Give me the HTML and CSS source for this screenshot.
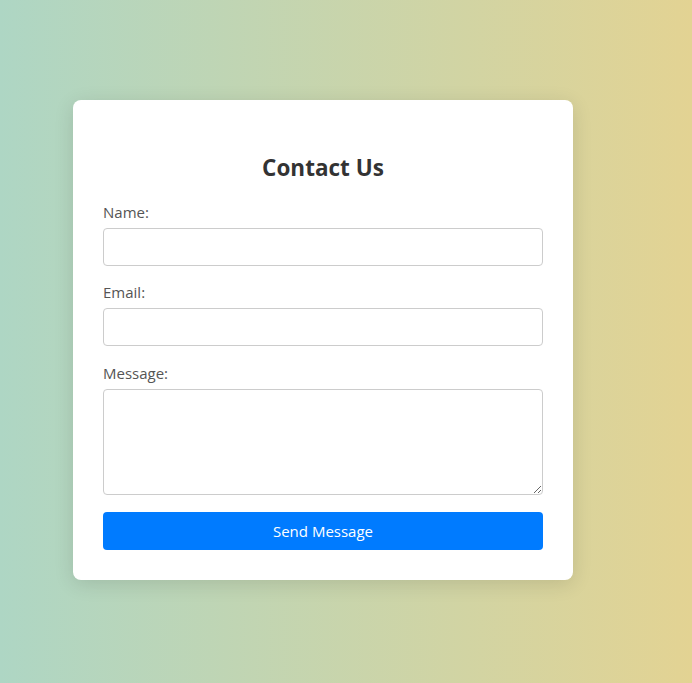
FILE: index.html
```html
<!DOCTYPE html>
<html lang="en">
<head>
<meta charset="utf-8">
<title>Contact Us</title>
<link rel="stylesheet" href="styles.css">
</head>
<body>
  <div class="card">
    <h2 class="title">Contact Us</h2>
    <form class="form">
      <div class="group">
        <label class="label" for="name">Name:</label>
        <input class="field" id="name" type="text">
      </div>
      <div class="group">
        <label class="label" for="email">Email:</label>
        <input class="field" id="email" type="email">
      </div>
      <div class="group group-msg">
        <label class="label" for="msg">Message:</label>
        <textarea class="field area" id="msg"></textarea>
      </div>
      <button class="btn" type="button">Send Message</button>
    </form>
  </div>
</body>
</html>
```
FILE: styles.css
```css
html, body {
  margin: 0;
  height: 100%;
}
body {
  background: linear-gradient(to right, #aed6c4, #e3d393);
  font-family: "Open Sans", "Noto Sans", sans-serif;
  box-sizing: border-box;
  padding: 100px 0 0 73px;
}
.card {
  width: 500px;
  box-sizing: border-box;
  background: #fff;
  border-radius: 8px;
  padding: 30px;
  box-shadow: 0 4px 20px rgba(0, 0, 0, 0.12);
}
.title {
  margin: 21px 0 16px;
  text-align: center;
  font-size: 22.5px;
  line-height: 34px;
  font-weight: 700;
  color: #333;
}
.form {
  display: flex;
  flex-direction: column;
}
.group {
  display: flex;
  flex-direction: column;
  margin-bottom: 15px;
}
.group-msg {
  padding-top: 1px;
}
.label {
  font-size: 15px;
  line-height: 22px;
  color: #555;
  margin-bottom: 5px;
}
.field {
  box-sizing: border-box;
  height: 38px;
  border: 1px solid #ccc;
  border-radius: 4px;
  padding: 8px;
  font: inherit;
  background: #fff;
}
.area {
  height: 106px;
  resize: vertical;
  margin-bottom: 2px;
}
.btn {
  height: 38px;
  border: none;
  border-radius: 4px;
  background: #007bff;
  color: #fff;
  font-family: inherit;
  font-size: 15px;
  cursor: pointer;
}
```
